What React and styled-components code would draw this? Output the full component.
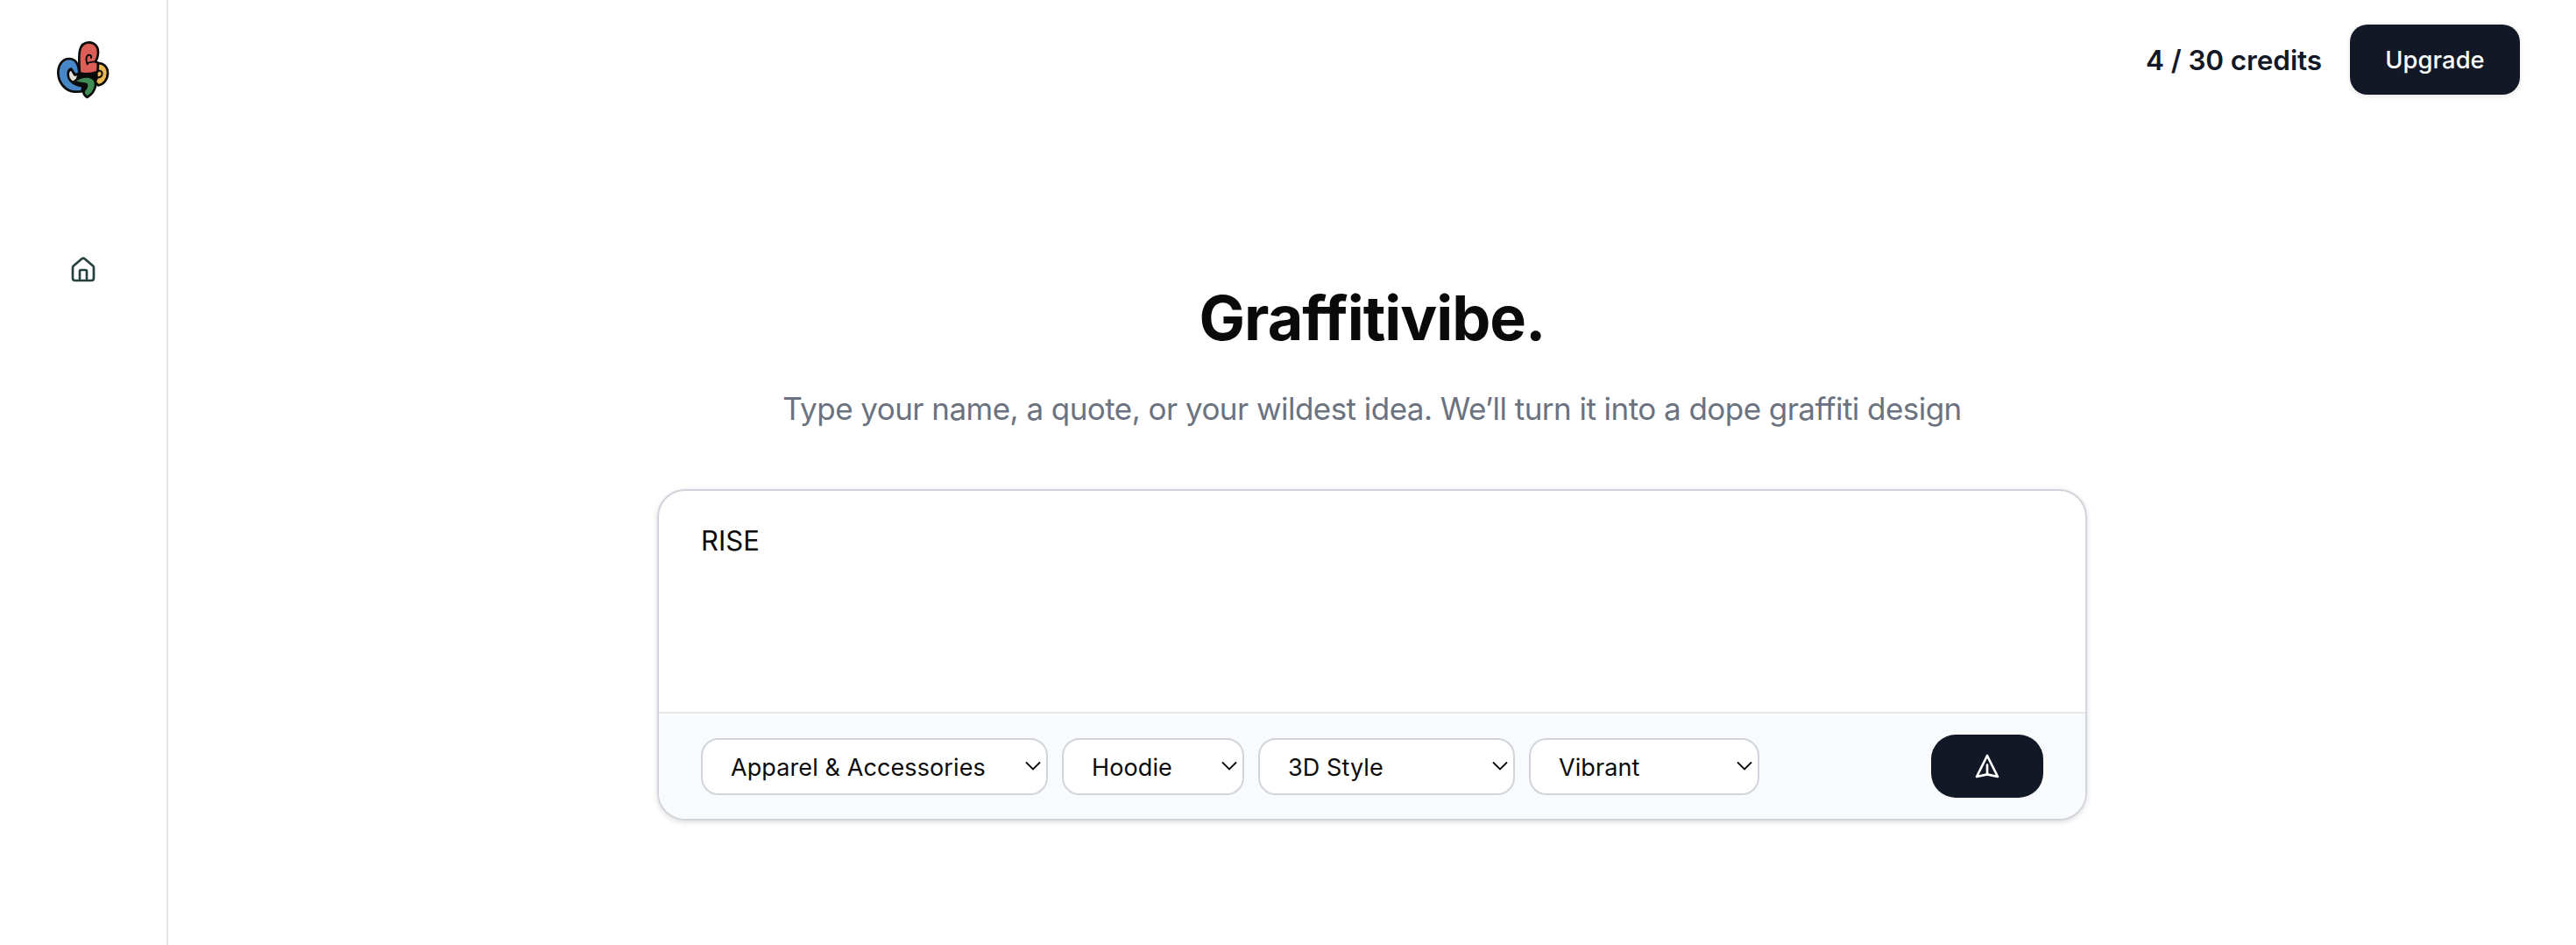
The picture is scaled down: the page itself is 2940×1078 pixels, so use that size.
import React, { useState } from "react";
import styled, { createGlobalStyle } from "styled-components";
import { House } from "lucide-react";

const GlobalStyle = createGlobalStyle`
    * {
        box-sizing: border-box;
    }
    body {
        margin: 0;
        background: #ffffff;
        color: #0a0a0a;
        font-family: Inter, "Liberation Sans", sans-serif;
        -webkit-font-smoothing: antialiased;
    }
    button, select, textarea {
        font-family: inherit;
        color: inherit;
    }
`;

//layout
const Page = styled.div`
    display: flex;
    width: 100%;
    height: 100vh;
    overflow: hidden;
`;
const Sidebar = styled.aside`
    display: flex;
    flex-direction: column;
    align-items: center;
    flex: 0 0 192px;
    padding-top: 46px;
    border-right: 2px solid #e4e4eb;
`;
const NavLink = styled.a`
    display: flex;
    margin-top: 177px;
    color: #264040;
`;
const Main = styled.main`
    display: flex;
    flex-direction: column;
    flex: 1;
`;

//top bar
const TopBar = styled.header`
    display: flex;
    justify-content: flex-end;
    align-items: center;
    gap: 32px;
    padding: 28px 64px 0 0;
`;
const Credits = styled.span`
    padding-top: 2px;
    font-size: 31.5px;
    font-weight: 600;
    line-height: 48px;
    letter-spacing: -0.1px;
    color: #131827;
`;
const UpgradeButton = styled.button`
    width: 194px;
    height: 80px;
    border: none;
    border-radius: 20px;
    background: #131827;
    color: #ffffff;
    font-size: 27.3px;
    font-weight: 500;
    letter-spacing: 0.1px;
    box-shadow: 0 2px 6px rgba(0, 0, 0, 0.1);
`;

//hero
const Hero = styled.section`
    display: flex;
    flex-direction: column;
    align-items: center;
    padding-top: 219px;
`;
const Title = styled.h1`
    margin: 0;
    font-size: 70px;
    font-weight: 700;
    line-height: 72px;
    letter-spacing: -1px;
`;
const Subtitle = styled.p`
    margin: 39px 0 64px;
    font-size: 35px;
    line-height: 56px;
    letter-spacing: -0.54px;
    color: #6b7280;
`;

//prompt box
const PromptCard = styled.form`
    width: 1632px;
    height: 378px;
    display: flex;
    flex-direction: column;
    overflow: hidden;
    border: 2px solid #d1d5db;
    border-radius: 32px;
    background: #ffffff;
    box-shadow: 0 2px 6px rgba(0, 0, 0, 0.14);
`;
const PromptInput = styled.textarea`
    flex: 1;
    padding: 33px 48px 31px;
    border: none;
    outline: none;
    resize: none;
    background: transparent;
    font-size: 31px;
    line-height: 48px;
`;
const PromptFooter = styled.div`
    display: flex;
    justify-content: space-between;
    align-items: center;
    height: 122px;
    padding: 0 48px;
    border-top: 2px solid #e5e7eb;
    background: #f9fafb;
`;
const Options = styled.div`
    display: flex;
    gap: 16px;
`;
const SelectBox = styled.div`
    display: grid;
    align-items: center;
    width: ${props => props.$width}px;
    height: 65px;

    > * {
        grid-area: 1 / 1;
    }
`;
const StyledSelect = styled.select`
    appearance: none;
    width: 100%;
    height: 100%;
    padding: 2px 32px 0;
    border: 2px solid #d1d5db;
    border-radius: 20px;
    background: #ffffff;
    font-size: 27px;
    letter-spacing: 0.1px;
`;
const Chevron = styled.svg`
    justify-self: end;
    margin-right: 7px;
    pointer-events: none;
`;
const SendButton = styled.button`
    display: flex;
    justify-content: center;
    align-items: center;
    width: 128px;
    height: 72px;
    border: none;
    border-radius: 28px;
    background: #131827;
    color: #ffffff;
`;

const optionFields = [
    {name: "category", value: "Apparel & Accessories", width: 396},
    {name: "product", value: "Hoodie", width: 208},
    {name: "style", value: "3D Style", width: 293},
    {name: "palette", value: "Vibrant", width: 263},
];

function Logo() {
    return (
        <svg width="62" height="69" viewBox="42 48 186 207" stroke="#0b0b0b" strokeWidth="8" strokeLinejoin="round" strokeLinecap="round">
            <path d="M118 150 L184 150 L176 200 L140 224 L110 205Z" fill="#0b0b0b"/>
            <path d="M82 162 L92 146 L106 168 L118 166 L110 186 L98 190 L82 180Z" fill="#e4e0d8" strokeWidth="5"/>
            <path d="M182 127 C204 124 219 138 219 160 C219 182 205 199 186 202 L176 190 L182 176 L180 158Z" fill="#e9b850"/>
            <path d="M184 152 C196 150 203 158 199 167 C195 175 188 177 180 173" fill="none" strokeWidth="6"/>
            <path d="M121 162 C120 130 108 111 87 111 C63 111 49 133 49 160 C50 194 74 222 106 224 L130 223 L134 206 C112 202 92 193 85 176 C80 162 84 147 94 146 L106 165Z" fill="#4787c7"/>
            <path d="M123 160 C121 134 119 106 123 84 C127 64 138 55 155 55 C174 55 187 70 186 90 C185 104 182 114 176 121 L186 125 L184 156 C166 162 146 166 123 160Z" fill="#dc5f57"/>
            <path d="M149 130 C145 118 144 106 149 101 C155 95 164 99 162 108" fill="none" strokeWidth="6"/>
            <path d="M150 127 C155 122 164 121 176 121" fill="none" strokeWidth="5"/>
            <path d="M104 190 C118 177 135 171 154 173 C171 175 180 188 177 204 C174 221 162 235 148 243 C140 237 134 230 137 221 C145 213 149 206 146 199 C135 194 120 197 104 190Z" fill="#3f8c55"/>
        </svg>
    );
}

function SendIcon() {
    return (
        <svg width="32" height="32" viewBox="0 0 24 24" fill="none" stroke="currentColor" strokeWidth="2" strokeLinecap="round" strokeLinejoin="round">
            <path d="M12 19l9 2-9-18-9 18 9-2zm0 0v-8"/>
        </svg>
    );
}

function OptionSelect({name, value, width}) {
    return (
        <SelectBox $width={width}>
            <StyledSelect name={name} defaultValue={value}>
                <option value={value}>{value}</option>
            </StyledSelect>
            <Chevron width="20" height="12" viewBox="0 0 20 12" fill="none" stroke="#0a0a0a" strokeWidth="1.8">
                <path d="M2 1.5l8 8 8-8"/>
            </Chevron>
        </SelectBox>
    );
}

export default function App() {
    const [prompt, setPrompt] = useState("RISE");

    const handleSubmit = (event) => {
        event.preventDefault();
    }

    return (
        <Page>
            <GlobalStyle/>
            <Sidebar>
                <Logo/>
                <NavLink href="#">
                    <House size={32}/>
                </NavLink>
            </Sidebar>
            <Main>
                <TopBar>
                    <Credits>4 / 30 credits</Credits>
                    <UpgradeButton>Upgrade</UpgradeButton>
                </TopBar>
                <Hero>
                    <Title>Graffitivibe.</Title>
                    <Subtitle>Type your name, a quote, or your wildest idea. We’ll turn it into a dope graffiti design</Subtitle>
                    <PromptCard onSubmit={handleSubmit}>
                        <PromptInput
                            name="prompt"
                            value={prompt}
                            onChange={event => setPrompt(event.target.value)}
                        />
                        <PromptFooter>
                            <Options>
                                {optionFields.map(field => <OptionSelect key={field.name} {...field}/>)}
                            </Options>
                            <SendButton type="submit">
                                <SendIcon/>
                            </SendButton>
                        </PromptFooter>
                    </PromptCard>
                </Hero>
            </Main>
        </Page>
    );
}
